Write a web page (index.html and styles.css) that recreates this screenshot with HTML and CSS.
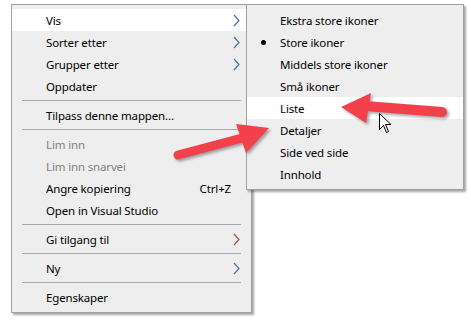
FILE: index.html
```html
<!DOCTYPE html>
<html>
<head>
<meta charset="utf-8">
<link rel="stylesheet" href="styles.css">
</head>
<body>
<div class="stage">
  <div class="menu main">
    <div class="item hover"><span class="label">Vis</span><svg class="chev" width="7" height="13" viewBox="0 0 7 13"><polyline points="1,1 6,6.5 1,12" fill="none" stroke="#4a6f9c" stroke-width="1.2"/></svg></div>
    <div class="item"><span class="label">Sorter etter</span><svg class="chev" width="7" height="13" viewBox="0 0 7 13"><polyline points="1,1 6,6.5 1,12" fill="none" stroke="#4a6f9c" stroke-width="1.2"/></svg></div>
    <div class="item"><span class="label">Grupper etter</span><svg class="chev" width="7" height="13" viewBox="0 0 7 13"><polyline points="1,1 6,6.5 1,12" fill="none" stroke="#4a6f9c" stroke-width="1.2"/></svg></div>
    <div class="item"><span class="label">Oppdater</span></div>
    <div class="sep"></div>
    <div class="item"><span class="label">Tilpass denne mappen...</span></div>
    <div class="sep"></div>
    <div class="item disabled"><span class="label">Lim inn</span></div>
    <div class="item disabled"><span class="label">Lim inn snarvei</span></div>
    <div class="item"><span class="label">Angre kopiering</span><span class="shortcut">Ctrl+Z</span></div>
    <div class="item"><span class="label">Open in Visual Studio</span></div>
    <div class="sep"></div>
    <div class="item"><span class="label">Gi tilgang til</span><svg class="chev" width="7" height="13" viewBox="0 0 7 13"><polyline points="1,1 6,6.5 1,12" fill="none" stroke="#b5503c" stroke-width="1.2"/></svg></div>
    <div class="sep"></div>
    <div class="item"><span class="label">Ny</span><svg class="chev" width="7" height="13" viewBox="0 0 7 13"><polyline points="1,1 6,6.5 1,12" fill="none" stroke="#4a6f9c" stroke-width="1.2"/></svg></div>
    <div class="sep"></div>
    <div class="item"><span class="label">Egenskaper</span></div>
  </div>

  <div class="menu sub">
    <div class="item"><span class="label">Ekstra store ikoner</span></div>
    <div class="item"><span class="bullet"></span><span class="label">Store ikoner</span></div>
    <div class="item"><span class="label">Middels store ikoner</span></div>
    <div class="item"><span class="label">Små ikoner</span></div>
    <div class="item hover"><span class="label">Liste</span></div>
    <div class="item"><span class="label">Detaljer</span></div>
    <div class="item"><span class="label">Side ved side</span></div>
    <div class="item"><span class="label">Innhold</span></div>
  </div>

  <svg class="overlay" width="471" height="322" viewBox="0 0 471 322">
    <g class="arrows" fill="#f2414b">
      <line x1="178" y1="155" x2="242" y2="138" stroke="#f2414b" stroke-width="9" stroke-linecap="round"/>
      <polygon points="236,124 269,128 246,153"/>
      <line x1="365" y1="106" x2="442" y2="112" stroke="#f2414b" stroke-width="10" stroke-linecap="round"/>
      <polygon points="341,107 371,93 366,123"/>
    </g>
    <path d="M379.5,113.5 L379.5,129.5 L383.5,125.5 L386.5,132.5 L388.5,131.5 L385.5,124.5 L391,124.5 Z" fill="#fff" stroke="#000" stroke-width="1"/>
  </svg>
</div>
</body>
</html>
```

FILE: styles.css
```css
html, body {
  margin: 0;
  padding: 0;
  background: #ffffff;
}

.stage {
  position: relative;
  width: 471px;
  height: 322px;
  padding: 4px 0 0 11px;
  box-sizing: border-box;
  font-family: "Noto Sans", "Open Sans", sans-serif;
  font-size: 11.5px;
  letter-spacing: -0.15px;
  color: #000;
}

.menu {
  background: #eeeeee;
  border: 1px solid #a0a0a0;
  box-shadow: 2px 2px 2px rgba(0, 0, 0, 0.35);
  padding: 4px 0;
  box-sizing: border-box;
}

.main {
  width: 241px;
}

.sub {
  position: absolute;
  left: 246px;
  top: 4px;
  width: 218px;
}

.item {
  height: 22px;
  display: flex;
  align-items: center;
  padding-left: 34px;
  padding-right: 11px;
  position: relative;
}

.sub .item {
  padding-left: 33px;
}

.item.hover {
  background: #ffffff;
}

.item.disabled {
  color: #808080;
}

.label {
  flex: 1;
  white-space: nowrap;
}

.shortcut {
  margin-right: 9px;
}

.chev {
  display: block;
}

.bullet {
  position: absolute;
  left: 14px;
  top: 9px;
  width: 5px;
  height: 5px;
  border-radius: 50%;
  background: #000;
}

.sep {
  height: 1px;
  background: #a8a8a8;
  margin: 3px 10px;
}

.overlay {
  position: absolute;
  left: 0;
  top: 0;
  pointer-events: none;
}

.arrows {
  filter: drop-shadow(2px 2px 1.5px rgba(0, 0, 0, 0.35));
}
```
